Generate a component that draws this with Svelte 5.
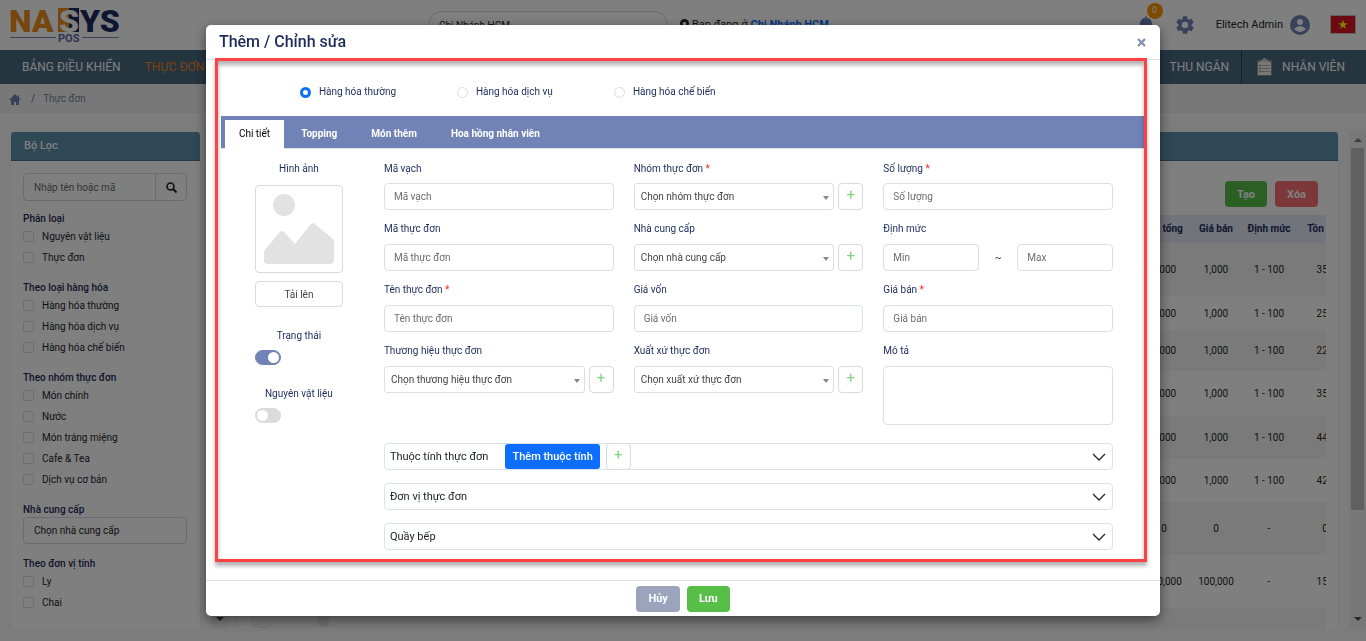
<script lang="ts">
  interface FilterGroup {
    title: string;
    items: string[];
  }

  const kinds = ['Hàng hóa thường', 'Hàng hóa dịch vụ', 'Hàng hóa chế biến'];
  const tabs = ['Chi tiết', 'Topping', 'Món thêm', 'Hoa hồng nhân viên'];

  const filters: FilterGroup[] = [
    { title: 'Phân loại', items: ['Nguyên vật liệu', 'Thực đơn'] },
    { title: 'Theo loại hàng hóa', items: kinds },
    {
      title: 'Theo nhóm thực đơn',
      items: ['Món chính', 'Nước', 'Món tráng miệng', 'Cafe & Tea', 'Dịch vụ cơ bản'],
    },
  ];

  const rows = [
    { total: '1,000', price: '1,000', quota: '1 - 100', stock: '350', height: 53 },
    { total: '1,000', price: '1,000', quota: '1 - 100', stock: '250', height: 35 },
    { total: '1,000', price: '1,000', quota: '1 - 100', stock: '220', height: 40 },
    { total: '1,000', price: '1,000', quota: '1 - 100', stock: '350', height: 45 },
    { total: '1,000', price: '1,000', quota: '1 - 100', stock: '440', height: 43 },
    { total: '1,000', price: '1,000', quota: '1 - 100', stock: '420', height: 43 },
    { total: '0', price: '0', quota: '-', stock: '0', height: 53 },
    { total: '100,000', price: '100,000', quota: '-', stock: '150', height: 53 },
  ];

  let kind = $state(kinds[0]);
  let activeTab = $state(tabs[0]);
  let active = $state(true);
  let material = $state(false);
</script>

{#snippet label(id: string, text: string, required = false)}
  <label for={id}>{text}{#if required}{' '}<span class="required">*</span>{/if}</label>
{/snippet}

{#snippet textField(id: string, text: string, required = false)}
  <div class="field">
    {@render label(id, text, required)}
    <input class="control" type="text" {id} placeholder={text} />
  </div>
{/snippet}

{#snippet selectField(id: string, text: string, placeholder: string, required = false)}
  <div class="field">
    {@render label(id, text, required)}
    <div class="select-row">
      <div class="select-wrap">
        <select class="control" {id}><option>{placeholder}</option></select>
      </div>
      <button class="plus" aria-label="Thêm">+</button>
    </div>
  </div>
{/snippet}

{#snippet placeholderImage()}
  <svg viewBox="0 0 70 70" aria-hidden="true">
    <circle cx="20" cy="11" r="11" fill="#e2e2e2" />
    <path d="M0 57 16 38q2-2 4 0l11 12 15-19q2-3 5-1l19 16v20q0 4-4 4H4q-4 0-4-4z" fill="#e2e2e2" />
  </svg>
{/snippet}

{#snippet filterGroup(group: FilterGroup)}
  <fieldset>
    <legend>{group.title}</legend>
    {#each group.items as item}
      <label class="check"><input type="checkbox" />{item}</label>
    {/each}
  </fieldset>
{/snippet}

<div class="page">
  <header class="topbar">
    <a class="logo" href="#home" aria-label="NASYS POS">
      <svg width="124" height="50" viewBox="0 0 124 50">
        <path d="M48 8h11v24H48z" fill="#ea8c1c" />
        <path d="M59 8h10v24H59z" fill="#1b2a63" />
        <text x="-1" y="32" class="logo-name" fill="#ea8c1c">NA</text>
        <text x="49" y="32" class="logo-name" fill="#fff">S</text>
        <text x="70" y="32" class="logo-name" fill="#1b2a63">YS</text>
        <path d="M0 37.500h46M72 37.500h37" stroke="#7383b5" />
        <text x="48" y="42" class="logo-pos" fill="#5a6ca6">POS</text>
      </svg>
    </a>
    <select class="branch-select" aria-label="Chi nhánh"><option>Chi Nhánh HCM</option></select>
    <p class="branch">
      <svg width="9" height="12" viewBox="0 0 12 16" fill="#212529">
        <path fill-rule="evenodd" d="M6 0a6 6 0 0 0-6 6c0 4 6 10 6 10s6-6 6-10a6 6 0 0 0-6-6zm0 3.500a2.500 2.500 0 1 1 0 5 2.500 2.500 0 0 1 0-5z" />
      </svg>
      Bạn đang ở <a href="#branch">Chi Nhánh HCM</a>
    </p>
    <div class="account">
      <button class="icon-btn bell" aria-label="Thông báo">
        <svg width="16" height="18" viewBox="0 0 16 18" fill="#7082b6">
          <path d="M8 0q1 0 1 2c3 0 5 3 5 6 0 4 1 5 2 6H0c1-1 2-2 2-6 0-3 2-6 5-6q0-2 1-2zM6 15h4q0 3-2 3t-2-3z" />
        </svg>
        <span class="badge">0</span>
      </button>
      <button class="icon-btn" aria-label="Cài đặt">
        <svg width="22" height="22" viewBox="0 0 24 24" fill="#7082b6">
          <path d="M19.140 12.940c.04-.3.06-.61.06-.94s-.02-.64-.07-.94l2.030-1.580c.18-.14.23-.41.12-.61l-1.920-3.320c-.12-.22-.37-.29-.59-.22l-2.390.96c-.5-.38-1.030-.7-1.620-.94L14.400 2.810c-.04-.24-.24-.41-.48-.41h-3.840c-.24 0-.43.17-.47.41L9.250 5.350c-.59.24-1.130.57-1.620.94L5.240 5.330c-.22-.08-.47 0-.59.22L2.740 8.870c-.12.21-.08.47.12.61l2.030 1.580c-.05.3-.09.63-.09.94s.02.64.07.94l-2.030 1.580c-.18.14-.23.41-.12.61l1.920 3.320c.12.22.37.29.59.22l2.390-.96c.5.38 1.030.7 1.620.94l.36 2.540c.05.24.24.41.48.41h3.840c.24 0 .44-.17.47-.41l.36-2.540c.59-.24 1.130-.56 1.620-.94l2.390.96c.22.08.47 0 .59-.22l1.920-3.320c.12-.22.07-.47-.12-.61l-2.010-1.580zM12 15.600a3.600 3.600 0 1 1 0-7.200 3.600 3.600 0 0 1 0 7.200z" />
        </svg>
      </button>
      <button class="icon-btn user">
        Elitech Admin
        <svg width="20" height="20" viewBox="0 0 20 20">
          <circle cx="10" cy="10" r="10" fill="#7082b6" />
          <circle cx="10" cy="7" r="3" fill="#fff" />
          <path d="M4 14q6-6 12 0-6 6-12 0z" fill="#fff" />
        </svg>
      </button>
      <button class="icon-btn" aria-label="Tiếng Việt">
        <svg width="26" height="19" viewBox="0 0 26 19">
          <path d="M.5.5h25v18H.5z" fill="#da1226" stroke="#c4c4c4" />
          <path d="m13 5 1.200 3.300h3.500l-2.800 2.100 1 3.400L13 11.800l-2.900 2 1-3.400-2.800-2.100h3.500z" fill="#ff0" />
        </svg>
      </button>
    </div>
  </header>

  <nav class="navbar">
    <a href="#dashboard">BẢNG ĐIỀU KHIỂN</a>
    <a href="#menu" class="current">THỰC ĐƠN</a>
    <a href="#cashier" class="right">THU NGÂN</a>
    <a href="#staff" class="divided">
      <svg width="15" height="18" viewBox="0 0 15 18">
        <path d="M0 2h15v16H0z" fill="#8d8d8d" />
        <path d="M1 4h13v13H1z" fill="#f3f3f3" />
        <path d="M3 4V2h2q2.500-4 5 0h2v2z" fill="#cfcfcf" />
        <path d="M2 7.500h11M2 10.500h11M2 13.500h11" stroke="#b4b4b4" />
        <path d="M3 6.500v9" stroke="#4fa36a" stroke-dasharray="2 1" />
      </svg>
      NHÂN VIÊN
    </a>
  </nav>

  <div class="breadcrumb">
    <a href="#home" aria-label="Trang chủ">
      <svg width="12" height="11" viewBox="0 0 12 11" fill="#7082b6">
        <path d="M6 0 0 6h2v5h3V8h2v3h3V6h2l-2-2V1H9v2z" />
      </svg>
    </a>
    <span>/</span>
    <span class="crumb">Thực đơn</span>
  </div>

  <div class="columns">
    <aside class="panel sidebar">
      <h2 class="panel-header">Bộ Lọc</h2>
      <div class="sidebar-body">
        <div class="search">
          <input type="text" placeholder="Nhập tên hoặc mã" aria-label="Nhập tên hoặc mã" />
          <button aria-label="Tìm kiếm">
            <svg width="11" height="11" viewBox="0 0 11 11" fill="none" stroke="#222">
              <circle cx="4.500" cy="4.500" r="3.500" stroke-width="1.600" />
              <path d="m7 7 3.500 3.500" stroke-width="2" />
            </svg>
          </button>
        </div>
        {#each filters as group}
          {@render filterGroup(group)}
        {/each}
        <fieldset>
          <legend>Nhà cung cấp</legend>
          <select aria-label="Nhà cung cấp"><option>Chọn nhà cung cấp</option></select>
        </fieldset>
        {@render filterGroup({ title: 'Theo đơn vị tính', items: ['Ly', 'Chai'] })}
      </div>
    </aside>
    <div class="scrollbar">
      <span class="arrow up"></span>
      <span class="thumb"></span>
      <span class="arrow down"></span>
    </div>

    <main class="panel">
      <div class="panel-header"></div>
      <div class="list">
        <div class="actions">
          <button class="btn green">Tạo</button>
          <button class="btn red">Xóa</button>
        </div>
        <div class="table-clip">
          <table>
            <colgroup>
              <col class="c-check" />
              <col class="c-image" />
              <col />
              <col class="c-total" />
              <col class="c-price" />
              <col class="c-quota" />
              <col class="c-quota" />
            </colgroup>
            <thead>
              <tr>
                <th></th>
                <th></th>
                <th></th>
                <th>Giá tổng</th>
                <th>Giá bán</th>
                <th>Định mức</th>
                <th>Tồn kho</th>
              </tr>
            </thead>
            <tbody>
              {#each rows as row}
                <tr style:height="{row.height}px">
                  <td></td>
                  <td></td>
                  <td></td>
                  <td>{row.total}</td>
                  <td>{row.price}</td>
                  <td>{row.quota}</td>
                  <td>{row.stock}</td>
                </tr>
              {/each}
              <tr class="last">
                <td><input type="checkbox" aria-label="Chọn món" /></td>
                <td>{@render placeholderImage()}</td>
                <td colspan="5"></td>
              </tr>
            </tbody>
          </table>
        </div>
      </div>
    </main>
    <div class="scrollbar">
      <span class="arrow up"></span>
      <span class="thumb"></span>
      <span class="arrow down"></span>
    </div>
  </div>
</div>

<div class="backdrop">
  <div class="modal" role="dialog" aria-modal="true" aria-labelledby="modal-title">
    <div class="modal-header">
      <h1 id="modal-title">Thêm / Chỉnh sửa</h1>
      <button class="close" aria-label="Đóng">
        <svg width="9" height="9" viewBox="0 0 9 9" stroke="#8490b4" stroke-width="2.400">
          <path d="m1 1 7 7M8 1 1 8" />
        </svg>
      </button>
    </div>

    <div class="modal-body">
      <div class="kinds">
        {#each kinds as k}
          <label><input type="radio" name="kind" value={k} bind:group={kind} />{k}</label>
        {/each}
      </div>

      <div class="tabs" role="tablist">
        {#each tabs as tab}
          <button
            role="tab"
            class:selected={tab === activeTab}
            aria-selected={tab === activeTab}
            onclick={() => (activeTab = tab)}
          >{tab}</button>
        {/each}
      </div>

      <div class="tab-content">
        <div class="media">
          <span class="media-label">Hình ảnh</span>
          <div class="thumbnail">{@render placeholderImage()}</div>
          <button class="upload">Tải lên</button>
          <label class="switch">
            Trạng thái
            <input type="checkbox" bind:checked={active} />
          </label>
          <label class="switch">
            Nguyên vật liệu
            <input type="checkbox" bind:checked={material} />
          </label>
        </div>

        <div class="form">
          <div class="fields">
            {@render textField('barcode', 'Mã vạch')}
            {@render selectField('group', 'Nhóm thực đơn', 'Chọn nhóm thực đơn', true)}
            {@render textField('quantity', 'Số lượng', true)}

            {@render textField('code', 'Mã thực đơn')}
            {@render selectField('supplier', 'Nhà cung cấp', 'Chọn nhà cung cấp')}
            <div class="field">
              {@render label('min', 'Định mức')}
              <div class="range">
                <input class="control" type="text" id="min" placeholder="Min" />
                <span>~</span>
                <input class="control" type="text" placeholder="Max" aria-label="Max" />
              </div>
            </div>

            {@render textField('name', 'Tên thực đơn', true)}
            {@render textField('cost', 'Giá vốn')}
            {@render textField('price', 'Giá bán', true)}

            {@render selectField('brand', 'Thương hiệu thực đơn', 'Chọn thương hiệu thực đơn')}
            {@render selectField('origin', 'Xuất xứ thực đơn', 'Chọn xuất xứ thực đơn')}
            <div class="field">
              {@render label('description', 'Mô tả')}
              <textarea class="control" id="description"></textarea>
            </div>
          </div>

          {#each ['Thuộc tính thực đơn', 'Đơn vị thực đơn', 'Quầy bếp'] as section, i}
            <div class="accordion">
              <span>{section}</span>
              {#if i === 0}
                <button class="add-attr">Thêm thuộc tính</button>
                <button class="plus" aria-label="Thêm">+</button>
              {/if}
              <button class="expand" aria-label="Mở {section}">
                <svg width="14" height="8" viewBox="0 0 14 8" fill="none" stroke="#212529" stroke-width="1.300">
                  <path d="m1 1 6 6 6-6" />
                </svg>
              </button>
            </div>
          {/each}
        </div>
      </div>
      <div class="highlight"></div>
    </div>

    <div class="modal-footer">
      <button class="btn grey">Hủy</button>
      <button class="btn green">Lưu</button>
    </div>
  </div>
</div>

<style>
  :global(body) {
    overflow: hidden;
    font-family: Roboto, sans-serif;
    font-size: 10px;
    line-height: 16px;
    color: #212529;
  }

  * {
    box-sizing: border-box;
  }

  button,
  input,
  select,
  textarea {
    margin: 0;
    font-family: inherit;
    font-size: inherit;
    color: inherit;
  }

  button {
    padding: 0;
    border: none;
    background: none;
    cursor: pointer;
  }

  a {
    text-decoration: none;
  }

  svg {
    display: block;
    flex-shrink: 0;
  }

  .page {
    display: flex;
    flex-direction: column;
    height: 100vh;
    padding-bottom: 13px;
    background: #f8f8f9;
  }

  /* Top bar */
  .topbar {
    display: flex;
    align-items: flex-start;
    height: 50px;
    flex-shrink: 0;
    background: #fff;
  }

  .logo {
    width: 428px;
    padding-left: 10px;
  }

  .logo-name {
    font-size: 32px;
    font-weight: 900;
  }

  .logo-pos {
    font-size: 11px;
    font-weight: 700;
  }

  .branch-select {
    appearance: none;
    width: 240px;
    height: 28px;
    margin-top: 11px;
    padding: 0 10px;
    border: 1px solid #d5d5da;
    border-radius: 14px;
    background: #fff;
  }

  .branch {
    display: flex;
    align-items: center;
    gap: 3px;
    margin: 17px 0 0 12px;
    font-size: 11px;
  }

  .branch a {
    font-weight: 700;
    color: #0d6efd;
  }

  .account {
    display: flex;
    align-items: center;
    gap: 20px;
    height: 49px;
    margin-left: auto;
    padding-right: 10px;
  }

  .icon-btn {
    position: relative;
  }

  .badge {
    position: absolute;
    top: -13px;
    left: 9px;
    width: 16px;
    height: 16px;
    border-radius: 8px;
    background: #ff9500;
    font-size: 9px;
    line-height: 15px;
    color: #fff;
  }

  .user {
    display: flex;
    align-items: center;
    gap: 7px;
    font-size: 11px;
  }

  /* Navigation */
  .navbar {
    display: flex;
    height: 34px;
    flex-shrink: 0;
    background: #496a80;
  }

  .navbar a {
    display: flex;
    align-items: center;
    gap: 10px;
    padding-left: 22px;
    font-size: 12px;
    color: #fff;
  }

  .navbar .current {
    padding-left: 24px;
    color: #f58220;
  }

  .navbar .right {
    margin-left: auto;
    padding-right: 12px;
  }

  .navbar .divided {
    padding: 0 21px 0 15px;
    border-left: 1px solid #2b4252;
  }

  .breadcrumb {
    display: flex;
    align-items: center;
    gap: 8px;
    height: 31px;
    flex-shrink: 0;
    padding-left: 9px;
    border-bottom: 1px solid #fff;
    background: #f1f1f2;
    color: #5a617a;
  }

  .breadcrumb a {
    margin-right: 2px;
  }

  .crumb {
    color: #76809f;
  }

  /* Filter and list panels */
  .columns {
    display: flex;
    flex: 1;
    min-height: 0;
    padding-top: 17px;
  }

  .panel {
    display: flex;
    flex-direction: column;
    overflow: hidden;
    border: 1px solid #f0f0f0;
    border-width: 0 1px;
    border-radius: 4px 4px 0 0;
    background: #fff;
  }

  .panel-header {
    height: 29px;
    flex-shrink: 0;
    margin: 0;
    padding: 0 13px;
    border-bottom: 1px solid #41718f;
    background: #5e90ad;
    font-size: 11px;
    line-height: 28px;
    font-weight: 500;
    color: #fff;
  }

  .sidebar {
    width: 191px;
    flex-shrink: 0;
    margin: 0 10px;
  }

  .sidebar-body {
    padding: 12px 13px 0 12px;
  }

  .search {
    display: flex;
    height: 28px;
    margin-bottom: -2px;
    border: 1px solid #d9d9de;
    border-radius: 4px;
  }

  .search input {
    flex: 1;
    min-width: 0;
    padding: 0 10px;
    border: none;
    background: none;
  }

  .search button {
    display: grid;
    place-items: center;
    width: 31px;
    border-left: 1px solid #d9d9de;
  }

  fieldset {
    min-width: 0;
    margin: 13px 0 0;
    padding: 0;
    border: none;
  }

  legend {
    padding: 0;
    line-height: 14px;
    font-weight: 500;
    color: #1d2b5a;
  }

  fieldset select {
    appearance: none;
    display: block;
    width: 100%;
    height: 27px;
    padding: 0 10px;
    border: 1px solid #d9d9de;
    border-radius: 4px;
    background: none;
  }

  .check {
    display: flex;
    align-items: center;
    gap: 8px;
    height: 21px;
  }

  input[type='checkbox'],
  input[type='radio'] {
    appearance: none;
    width: 11px;
    height: 11px;
    flex-shrink: 0;
    border: 1px solid #dcdce0;
    border-radius: 2px;
    background: #fff;
  }

  main {
    flex: 1;
    min-width: 0;
    margin: 0 10px 0 9px;
  }

  .list {
    padding: 20px 12px 0 13px;
  }

  .actions {
    display: flex;
    justify-content: flex-end;
    gap: 8px;
    margin: 0 8px 8px 0;
  }

  .btn {
    height: 26px;
    padding: 0 12px;
    border-radius: 4px;
    font-size: 11px;
    font-weight: 700;
    color: #fff;
  }

  .green {
    background: #57be47;
  }

  .red {
    background: #f87171;
  }

  .grey {
    background: #9ba3bd;
  }

  .table-clip {
    overflow: hidden;
  }

  table {
    width: calc(100% + 27px);
    table-layout: fixed;
    border-collapse: collapse;
    text-align: center;
  }

  th,
  td {
    padding: 0;
    white-space: nowrap;
  }

  th {
    height: 28px;
    background: #e5e9f6;
    color: #1d2b5a;
  }

  tbody tr:nth-child(odd) {
    background: #f5f5f5;
  }

  .c-check {
    width: 24px;
  }

  .c-image {
    width: 112px;
  }

  .c-total {
    width: 54px;
  }

  .c-price {
    width: 50px;
  }

  .c-quota {
    width: 56px;
  }

  .last td {
    height: 53px;
  }

  .last svg {
    width: 39px;
    height: 39px;
    margin: 0 auto;
  }

  .scrollbar {
    display: flex;
    flex-direction: column;
    align-items: center;
    width: 17px;
    flex-shrink: 0;
    background: #f1f1f1;
  }

  .thumb {
    width: 13px;
    height: 73%;
    background: #c1c1c1;
  }

  .arrow {
    margin: 6px 0;
    border: 4px solid transparent;
  }

  .arrow.up {
    margin-top: 2px;
    border-bottom-color: #7d7d7d;
  }

  .arrow.down {
    margin: auto 0 3px;
    border-top-color: #505050;
  }

  /* Dialog */
  .backdrop {
    position: fixed;
    inset: 0;
    background: rgba(0, 0, 0, 0.5);
  }

  .modal {
    width: calc(70% - 2px);
    margin: 25px auto 0;
    border-radius: 5px;
    background: #fff;
    box-shadow: 0 4px 12px rgba(0, 0, 0, 0.5);
  }

  .modal-header {
    display: flex;
    align-items: center;
    justify-content: space-between;
    height: 35px;
    padding: 0 14px 0 13px;
    border-bottom: 1px solid #dee2e6;
  }

  h1 {
    margin: 0;
    font-size: 16px;
    font-weight: 500;
    color: #1d2b5a;
  }

  .modal-body {
    position: relative;
    padding: 0 16px 30px 15px;
    color: #1d2b5a;
  }

  .highlight {
    position: absolute;
    inset: -2px 13px 18px 9px;
    border: 3px solid #fe4144;
    box-shadow: 0 4px 4px rgba(0, 0, 0, 0.3), inset 0 4px 4px rgba(0, 0, 0, 0.3);
    pointer-events: none;
  }

  .kinds {
    display: flex;
    height: 56px;
    padding: 8px 0 0 79px;
  }

  .kinds label {
    display: flex;
    align-items: center;
    gap: 8px;
    width: 157px;
  }

  input[type='radio'] {
    border-radius: 50%;
  }

  input[type='radio']:checked {
    border: 3px solid #0d6efd;
  }

  .tabs {
    display: flex;
    height: 33px;
    padding: 4px 4px 0;
    border-bottom: 1px solid #dee2e6;
    background: #7082b6;
  }

  .tabs button {
    height: 29px;
    padding: 0 17px 2px;
    font-weight: 700;
    color: #fff;
  }

  .tabs .selected {
    padding: 0 14px 2px;
    background: #fff;
    font-weight: 400;
    color: #000;
  }

  .tab-content {
    display: flex;
    gap: 41px;
    padding: 11px 31px 0 34px;
  }

  .media {
    display: flex;
    flex-direction: column;
    width: 88px;
    flex-shrink: 0;
  }

  .media-label {
    line-height: 18px;
    text-align: center;
  }

  .thumbnail {
    height: 88px;
    margin: 7px 0 8px;
    padding: 8px;
    border: 1px solid #d9d9de;
    border-radius: 4px;
  }

  .upload {
    height: 26px;
    border: 1px solid #d9d9de;
    border-radius: 4px;
    color: #444;
  }

  .switch {
    display: flex;
    flex-direction: column;
    align-items: center;
    gap: 5px;
    margin-top: 20px;
    line-height: 18px;
  }

  .switch input[type='checkbox'] {
    display: flex;
    align-self: flex-start;
    width: 26px;
    height: 15px;
    padding: 1px;
    border: 1px solid #dbdbdb;
    border-radius: 8px;
    background: #dbdbdb;
  }

  .switch input::before {
    content: '';
    width: 11px;
    height: 11px;
    border-radius: 50%;
    background: #fff;
  }

  .switch input[type='checkbox']:checked {
    justify-content: flex-end;
    border-color: #7082b6;
    background: #7082b6;
  }

  .form {
    flex: 1;
    min-width: 0;
  }

  .fields {
    display: grid;
    grid-template-columns: repeat(3, minmax(0, 1fr));
    gap: 10px 20px;
    margin-bottom: 18px;
  }

  .field > label {
    display: block;
    margin-bottom: 5px;
    padding-bottom: 1px;
    line-height: 18px;
  }

  .field:nth-child(-n + 3) > label {
    padding-bottom: 0;
  }

  .required {
    color: #ff2626;
  }

  .control {
    display: block;
    width: 100%;
    height: 27px;
    padding: 0 9px;
    border: 1px solid #dcdfe3;
    border-radius: 4px;
    background: #fff;
    color: #444;
  }

  ::placeholder {
    color: #6c6c6c;
    opacity: 1;
  }

  select.control {
    appearance: none;
    padding: 0 6px;
    border-radius: 3px;
  }

  textarea.control {
    height: 59px;
    resize: none;
  }

  .select-row {
    display: flex;
    gap: 4px;
  }

  .select-wrap {
    position: relative;
    flex: 1;
  }

  .select-wrap::after {
    content: '';
    position: absolute;
    top: 13px;
    right: 5px;
    border: 3px solid transparent;
    border-top: 4px solid #888;
    border-bottom: none;
    pointer-events: none;
  }

  .plus {
    width: 25px;
    height: 27px;
    flex-shrink: 0;
    border: 1px solid #d9d9de;
    border-radius: 4px;
    background: #fff;
    padding-bottom: 3px;
    font-size: 15px;
    line-height: 20px;
    color: #7ed67c;
  }

  .range {
    display: grid;
    grid-template-columns: 1fr 38px 1fr;
    align-items: center;
    text-align: center;
  }

  .accordion {
    display: flex;
    align-items: center;
    height: 27px;
    margin-top: 14px;
    padding: 0 6px 0 5px;
    border: 1px solid #dee2e6;
    border-radius: 4px;
    font-size: 11px;
    color: #212529;
  }

  .accordion + .accordion {
    margin-top: 13px;
  }

  .add-attr {
    height: 25px;
    margin: 0 6px 0 17px;
    padding: 0 7px;
    border-radius: 3px;
    background: #0d6efd;
    font-weight: 500;
    color: #fff;
  }

  .expand {
    margin-left: auto;
  }

  .modal-footer {
    display: flex;
    align-items: center;
    justify-content: center;
    gap: 7px;
    height: 36px;
    border-top: 1px solid #dee2e6;
  }
</style>
